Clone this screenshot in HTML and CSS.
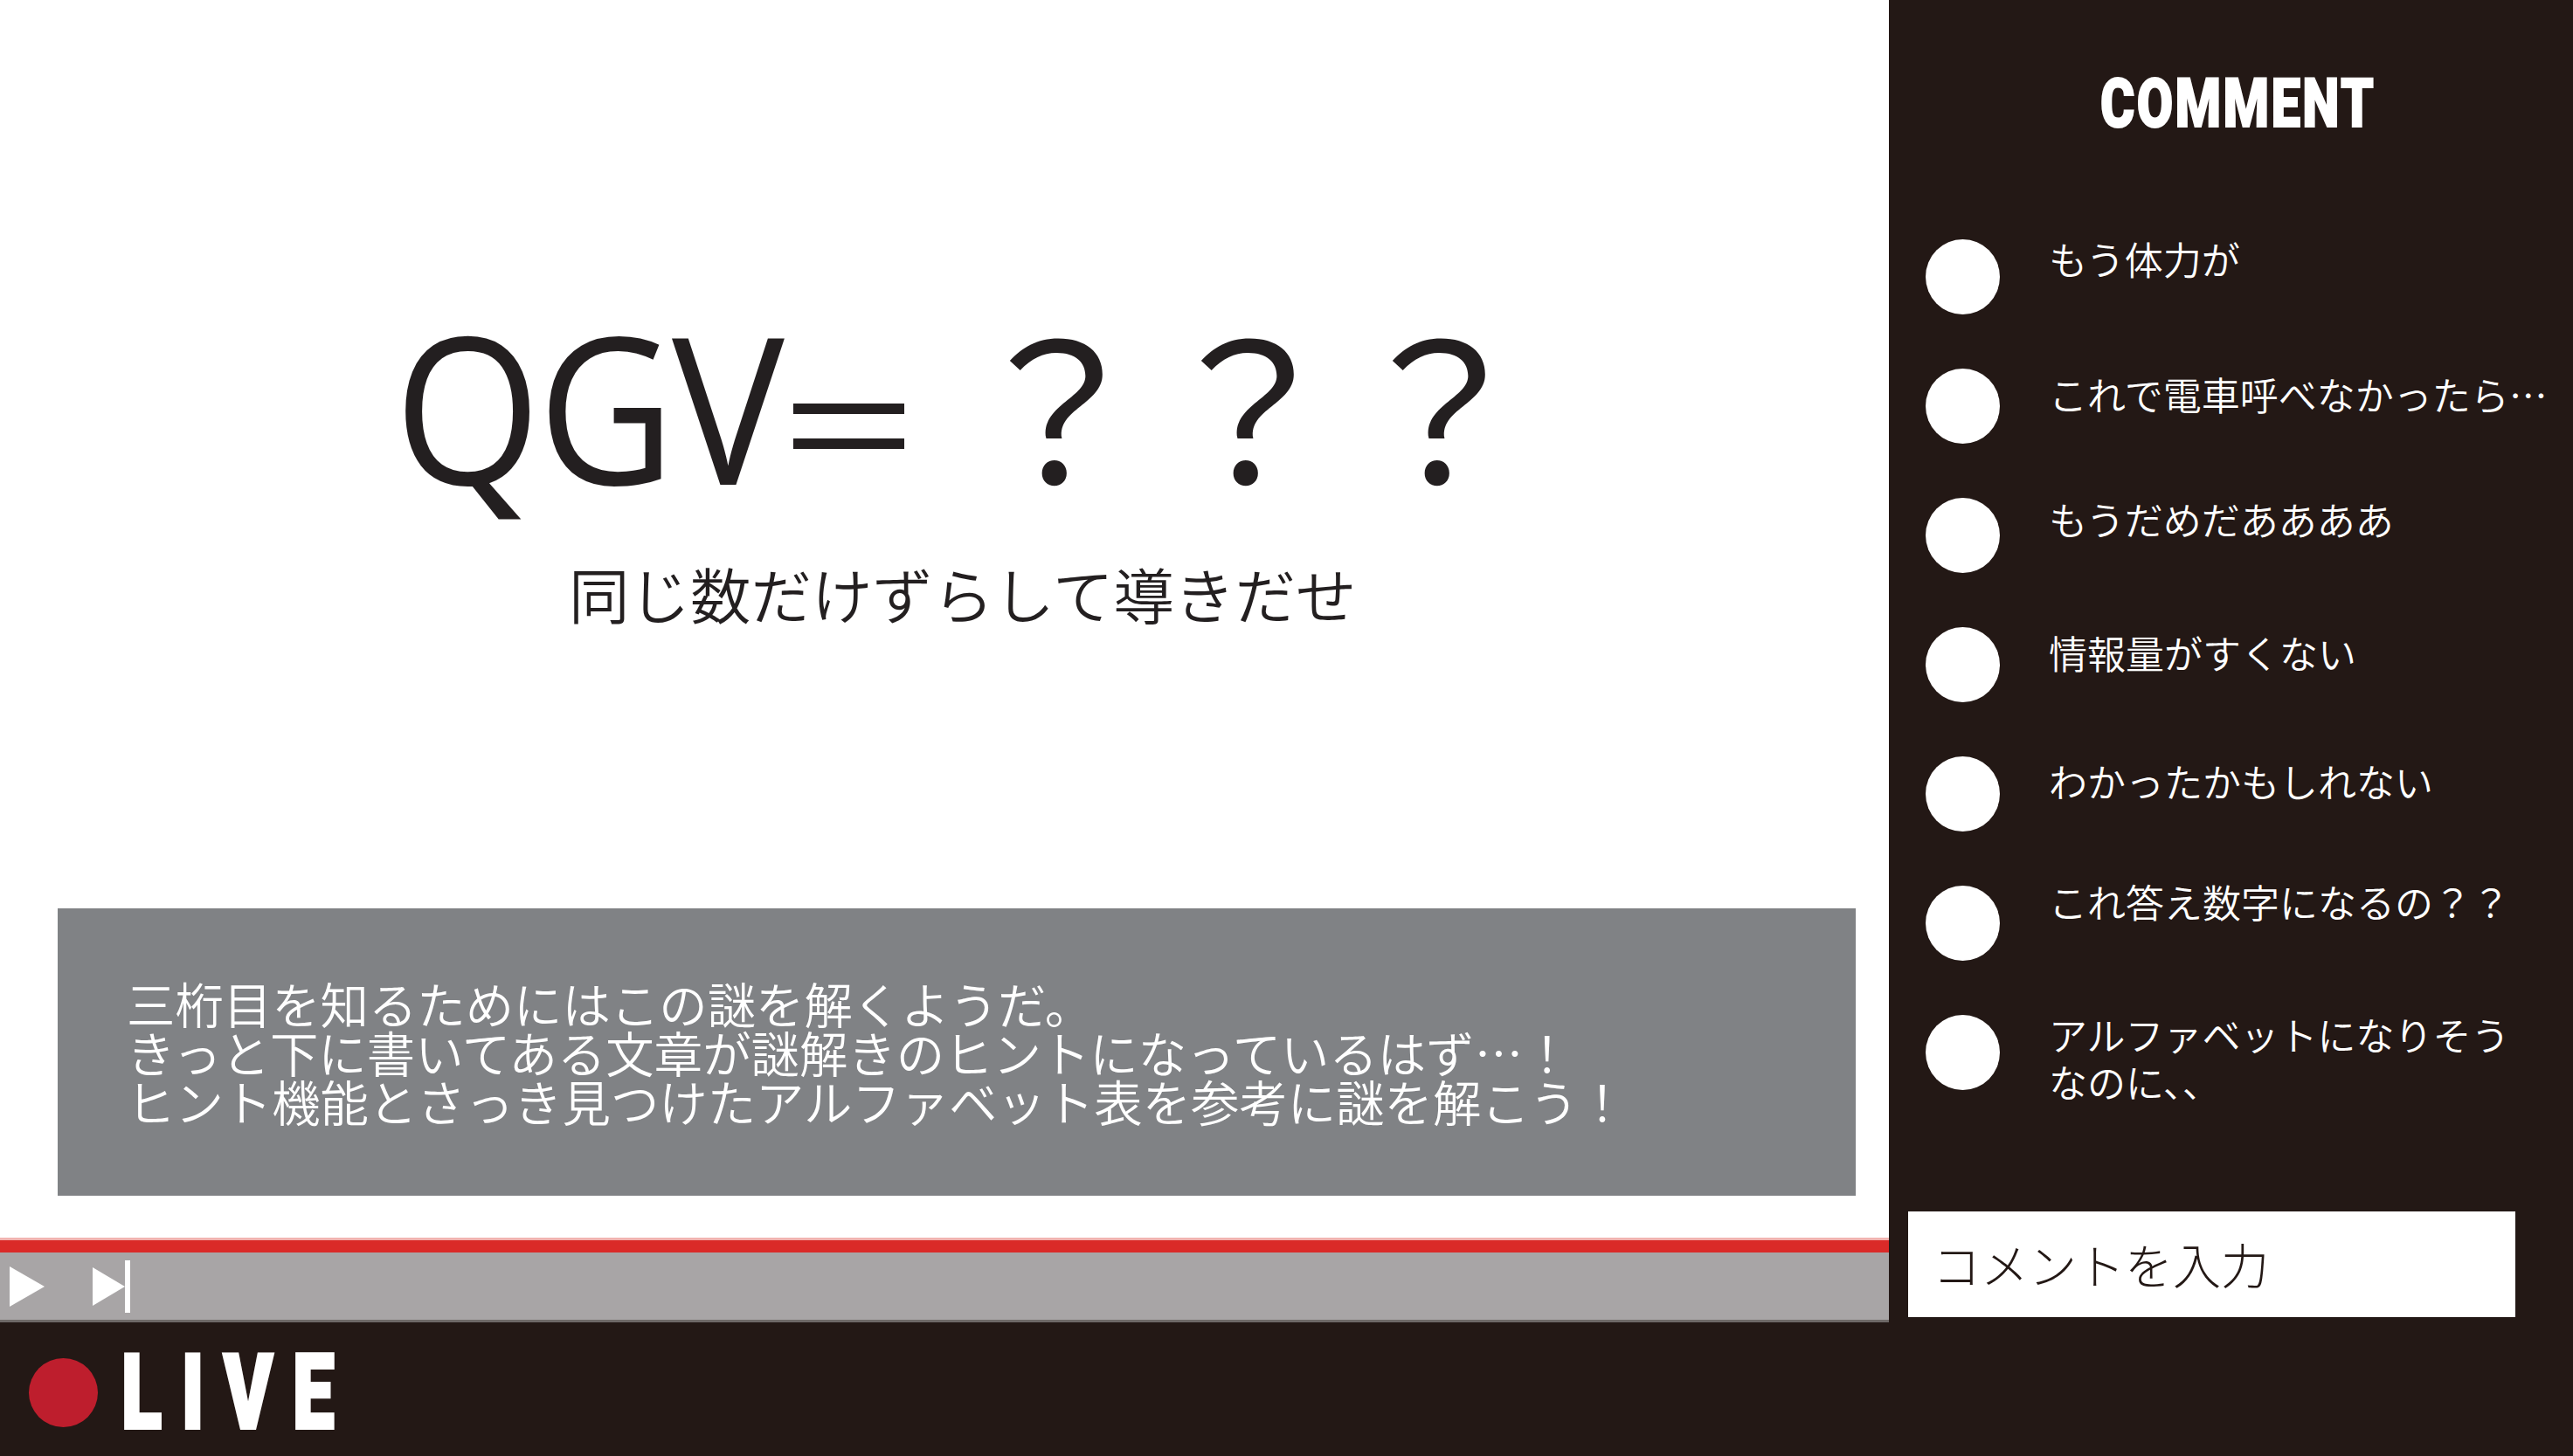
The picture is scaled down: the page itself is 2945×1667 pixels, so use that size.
FILE: index.html
```html
<!DOCTYPE html>
<html lang="ja">
<head>
    <meta charset="UTF-8">
    <meta name="viewport" content="width=device-width, initial-scale=1.0">
    <title>LIVE</title>
    <link rel="stylesheet" href="styles.css">
</head>
<body>
    <div class="screen">
        <div class="main-col">
            <main class="stage">
                <h1 class="riddle"><span class="riddle-code">QGV</span><span class="riddle-eq">＝</span><span class="riddle-rest">？？？</span></h1>
                <p class="riddle-hint">同じ数だけずらして導きだせ</p>
                <div class="message">
                    <p>三桁目を知るためにはこの謎を解くようだ。</p>
                    <p>きっと下に書いてある文章が謎解きのヒントになっているはず…！</p>
                    <p>ヒント機能とさっき見つけたアルファベット表を参考に謎を解こう！</p>
                </div>
            </main>

            <div class="player">
                <div class="progress"></div>
                <div class="controls">
                    <svg class="icon-play" width="40" height="46" viewBox="0 0 40 46"><polygon points="0,0 40,23 0,46" fill="#fff"/></svg>
                    <svg class="icon-next" width="44" height="60" viewBox="0 0 44 60"><polygon points="0,8 37,30 0,52" fill="#fff"/><rect x="37" y="0" width="6" height="60" fill="#fff"/></svg>
                </div>
            </div>

            <div class="live-bar">
                <span class="live-dot"></span>
                <span class="live-text">LIVE</span>
            </div>
        </div>

        <aside class="sidebar">
            <h2 class="sidebar-title">COMMENT</h2>
            <ul class="comments">
                <li class="comment"><span class="avatar"></span><p>もう体力が</p></li>
                <li class="comment"><span class="avatar"></span><p>これで電車呼べなかったら…</p></li>
                <li class="comment"><span class="avatar"></span><p>もうだめだああああ</p></li>
                <li class="comment"><span class="avatar"></span><p>情報量がすくない</p></li>
                <li class="comment"><span class="avatar"></span><p>わかったかもしれない</p></li>
                <li class="comment"><span class="avatar"></span><p>これ答え数字になるの？？</p></li>
                <li class="comment"><span class="avatar"></span><p>アルファベットになりそう<br>なのに、、</p></li>
            </ul>
            <div class="comment-input">コメントを入力</div>
        </aside>
    </div>
</body>
</html>
```

FILE: styles.css
```css
* {
    box-sizing: border-box;
}

body {
    margin: 0;
    background: #231815;
    color: #231f20;
    font-family: "Noto Sans CJK JP", "Noto Sans", sans-serif;
    font-weight: 300;
}

p, h1, h2, ul {
    margin: 0;
    padding: 0;
}

.screen {
    display: grid;
    grid-template-columns: 2162px 783px;
    height: 1667px;
    overflow: hidden;
}

.main-col {
    display: flex;
    flex-direction: column;
}

/* white area */
.stage {
    height: 1417px;
    background: #fff;
    display: flex;
    flex-direction: column;
    padding: 325px 38px 48px 66px;
}

.riddle {
    display: flex;
    align-items: baseline;
    height: 270px;
    padding-left: 385px;
    font-size: 219px;
    font-weight: 400;
    line-height: 270px;
    white-space: nowrap;
}

.riddle-code {
    flex: none;
    width: 433px;
    font-family: "Open Sans", sans-serif;
    font-size: 235px;
    transform: scaleX(0.92);
    transform-origin: left;
    letter-spacing: -4px;
}

.riddle-eq {
    flex: none;
    width: 175px;
    font-size: 175px;
}

.riddle-rest {
    margin-left: 41px;
}

.riddle-hint {
    margin-top: 39px;
    padding-left: 585px;
    font-size: 69.5px;
    font-weight: 350;
    line-height: 90px;
    white-space: nowrap;
}

.message {
    margin-top: auto;
    height: 329px;
    padding: 80px 0 0 79px;
    background: #808285;
    color: #fff;
    font-size: 55.4px;
    font-weight: 350;
    line-height: 56px;
    white-space: nowrap;
}

/* player bar */
.progress {
    height: 17px;
    background: #da2a28;
    border-top: 3px solid #f2b3b0;
}

.controls {
    height: 80px;
    display: flex;
    align-items: center;
    gap: 55px;
    padding-left: 11px;
    background: #a8a5a6;
    border-bottom: 3px solid #6e6968;
}

.icon-play, .icon-next {
    display: block;
}

.live-bar {
    flex: 1;
    display: flex;
    align-items: center;
    gap: 27px;
    padding: 8px 0 0 33px;
}

.live-dot {
    width: 79px;
    height: 79px;
    border-radius: 50%;
    background: #be1e2d;
}

.live-text {
    display: inline-block;
    color: #fff;
    font-family: "Roboto", sans-serif;
    font-size: 118px;
    font-weight: 900;
    line-height: 88px;
    letter-spacing: 31.5px;
    transform: scaleX(0.72);
    transform-origin: left;
    -webkit-text-stroke: 4px #fff;
}

/* comments */
.sidebar {
    display: flex;
    flex-direction: column;
    padding: 0 66px 0 22px;
    color: #fff;
}

.sidebar-title {
    margin-top: 90px;
    padding-left: 220px;
    font-family: "Roboto", sans-serif;
    font-size: 78px;
    font-weight: 900;
    line-height: 58px;
    letter-spacing: 3px;
    white-space: nowrap;
    transform: scaleX(0.77);
    transform-origin: 220px 0;
    -webkit-text-stroke: 2px #fff;
}

.comments {
    list-style: none;
    margin-top: 126px;
    height: 1113px;
}

.comment {
    display: flex;
    height: 148px;
    padding-left: 20px;
    gap: 56px;
    font-size: 44px;
    font-weight: 350;
    line-height: 54px;
    white-space: nowrap;
}

.comment p {
    margin-top: -5px;
}

.comment:nth-child(even) p {
    margin-top: 2px;
}

.comment:nth-child(3) p {
    margin-top: -3px;
}

.comment:nth-child(5) p {
    margin-top: 1px;
}

.comment:nth-child(6) p {
    margin-top: -9px;
}

.avatar {
    flex: none;
    width: 85px;
    height: 86px;
    border-radius: 50%;
    background: #fff;
}

.comment-input {
    height: 121px;
    padding-left: 28px;
    background: #fff;
    color: #231815;
    font-size: 55px;
    line-height: 119px;
}
```
